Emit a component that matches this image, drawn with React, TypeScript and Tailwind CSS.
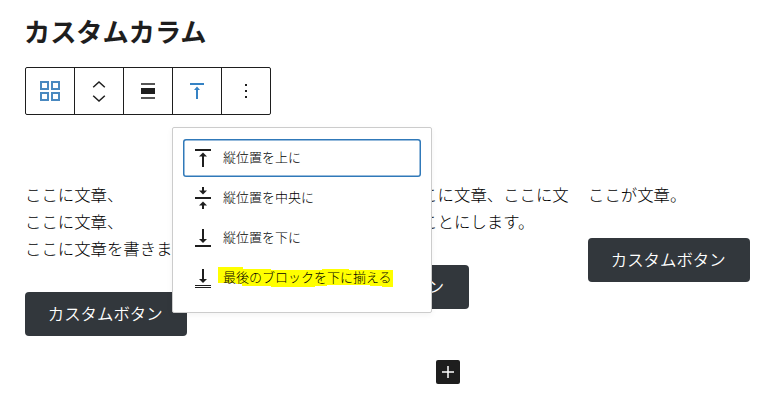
import type { ReactNode } from "react";

type Align = "top" | "center" | "bottom" | "last";

const MENU_ITEMS: { align: Align; label: string }[] = [
  { align: "top", label: "縦位置を上に" },
  { align: "center", label: "縦位置を中央に" },
  { align: "bottom", label: "縦位置を下に" },
  { align: "last", label: "最後のブロックを下に揃える" },
];

const COLUMNS: string[][] = [
  ["ここに文章、", "ここに文章、", "ここに文章を書きます。"],
  ["ここに文章、ここに文章、ここに文", "章を書くということにします。"],
  ["ここが文章。"],
];

function AlignIcon({ align }: { align: Align }) {
  return (
    <svg width="24" height="24" viewBox="0 0 24 24" fill="currentColor" className="shrink-0">
      {align === "top" && <path d="M4 3h16v2H4zM11 21V10.500H8l4-4 4 4h-3V21z" />}
      {align === "center" && (
        <path d="M4 11h16v2H4zM11 1h2v3.500h3l-4 4-4-4h3zM11 23h2v-3.500h3l-4-4-4 4h3z" />
      )}
      {align === "bottom" && <path d="M4 19h16v2H4zM11 3h2v10h3l-4 4-4-4h3z" />}
      {align === "last" && <path d="M4 19h16v1H4zM4 21h16v1H4zM11 3h2v10h3l-4 4-4-4h3z" />}
    </svg>
  );
}

function ToolbarCell({ children }: { children: ReactNode }) {
  return (
    <button
      type="button"
      className="flex h-full w-[49px] items-center justify-center border-r border-[#1e1e1e] last:w-12 last:border-r-0"
    >
      {children}
    </button>
  );
}

function Toolbar() {
  return (
    <div className="mt-4 flex h-12 w-[246px] rounded-[2px] border border-[#1e1e1e] bg-white text-[#1e1e1e]">
      <ToolbarCell>
        <svg width="24" height="24" viewBox="0 0 24 24" fill="none" stroke="#4a89c0" strokeWidth="2">
          <path d="M3 3h7v7H3zM14 3h7v7h-7zM3 14h7v7H3zM14 14h7v7h-7z" />
        </svg>
      </ToolbarCell>
      <ToolbarCell>
        <svg width="24" height="24" viewBox="0 0 24 24" fill="none" stroke="currentColor" strokeWidth="1.5">
          <path d="M6.200 8.200 12 3l5.800 5.200M6.200 16.800 12 22l5.800-5.200" />
        </svg>
      </ToolbarCell>
      <ToolbarCell>
        <svg width="24" height="24" viewBox="0 0 24 24" fill="currentColor">
          <path d="M5 9h14v6H5z" />
          <path d="M5 4h14v2H5zM5 18h14v2H5z" fill="#555" />
        </svg>
      </ToolbarCell>
      <ToolbarCell>
        <svg width="24" height="24" viewBox="0 0 24 24" fill="#3582c4">
          <path d="M5 4h14v2H5zM11 20v-9H9l3-3.500 3 3.500h-2v9z" />
        </svg>
      </ToolbarCell>
      <ToolbarCell>
        <svg width="24" height="24" viewBox="0 0 24 24" fill="currentColor">
          <path d="M11 5h2v2h-2zM11 11h2v2h-2zM11 17h2v2h-2z" />
        </svg>
      </ToolbarCell>
    </div>
  );
}

function AlignMenu() {
  return (
    <div className="absolute left-[172px] top-[127px] flex h-[186px] w-[260px] flex-col gap-0.5 rounded-[2px] border border-[#ccc] bg-white pl-2.5 pt-[11px] shadow-[0_2px_6px_rgba(0,0,0,0.05)]">
      {MENU_ITEMS.map(({ align, label }) => (
        <button
          key={align}
          type="button"
          className={
            align === "top"
              ? "flex h-[38px] w-[238px] items-center rounded-[3px] px-2 text-[#1e1e1e] ring-[1.5px] ring-inset ring-[#3079b9]"
              : "flex h-[38px] w-[238px] items-center px-2 text-[#1e1e1e]"
          }
        >
          <AlignIcon align={align} />
          <span className="relative mb-0.5 ml-2 whitespace-nowrap text-[13px] leading-5">
            {align === "last" && (
              <svg
                className="absolute -left-[5px] top-0 h-5 w-44"
                viewBox="0 0 176 20"
                fill="#ffff00"
              >
                <path d="M0 0h25v2h28v1h51v-1h27v1h44v17h-11v-1h-12v-1h-43v1H97v1H53v-1H24v-2h-6v-1H0z" />
              </svg>
            )}
            <span className="relative font-light text-black">{label}</span>
          </span>
        </button>
      ))}
    </div>
  );
}

export default function App() {
  return (
    <div className="relative h-[405px] w-[771px] overflow-hidden bg-white pl-[25px] pt-[11px] font-['Noto_Sans_CJK_JP',sans-serif] text-[#1e1e1e]">
      <h1 className="-ml-px h-10 text-[26.200px] font-bold leading-[40px]">カスタムカラム</h1>
      <Toolbar />

      {/* Columns */}
      <div className="mt-[66px] flex w-[826px] gap-[18px]">
        {COLUMNS.map((lines, i) => (
          <div key={i} className="w-[263.500px] shrink-0">
            <div className="text-[16.400px] font-light leading-[27px] text-black">
              {lines.map((line, n) => (
                <p key={n} className="whitespace-nowrap">
                  {line}
                </p>
              ))}
            </div>
            <button
              type="button"
              className="mt-[30px] block h-11 w-[162.400px] rounded-[4px] bg-[#32373c] pb-0.5 pr-[2px] text-[16.400px] font-[350] leading-[40px] text-white"
            >
              カスタムボタン
            </button>
          </div>
        ))}
      </div>

      {/* Block appender */}
      <div className="mt-6 flex w-[846px] justify-center">
        <button type="button" className="flex size-6 items-center justify-center rounded-[2px] bg-[#1e1e1e]">
          <svg width="24" height="24" viewBox="0 0 24 24" fill="#fff">
            <path d="M11.250 6h1.500v5.250H18v1.500h-5.250V18h-1.500v-5.250H6v-1.500h5.250z" />
          </svg>
        </button>
      </div>

      <AlignMenu />
    </div>
  );
}
